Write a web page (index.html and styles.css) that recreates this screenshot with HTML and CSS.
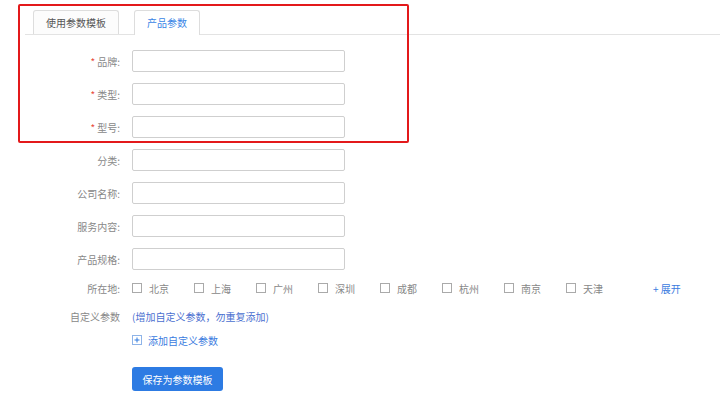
FILE: index.html
```html
<!DOCTYPE html>
<html lang="zh-CN">
<head>
    <meta charset="UTF-8">
    <meta name="viewport" content="width=device-width, initial-scale=1.0">
    <title>产品参数</title>
    <link rel="stylesheet" href="styles.css">
</head>
<body>
    <div class="page">
        <div class="tabs">
            <div class="tab">使用参数模板</div>
            <div class="tab active">产品参数</div>
        </div>

        <div class="form">
            <div class="form-row">
                <label class="form-label"><span class="req">*</span>品牌:</label>
                <input type="text" class="form-input">
            </div>
            <div class="form-row">
                <label class="form-label"><span class="req">*</span>类型:</label>
                <input type="text" class="form-input">
            </div>
            <div class="form-row">
                <label class="form-label"><span class="req">*</span>型号:</label>
                <input type="text" class="form-input">
            </div>
            <div class="form-row">
                <label class="form-label">分类:</label>
                <input type="text" class="form-input">
            </div>
            <div class="form-row">
                <label class="form-label">公司名称:</label>
                <input type="text" class="form-input">
            </div>
            <div class="form-row">
                <label class="form-label">服务内容:</label>
                <input type="text" class="form-input">
            </div>
            <div class="form-row">
                <label class="form-label">产品规格:</label>
                <input type="text" class="form-input">
            </div>

            <div class="form-row city-row">
                <label class="form-label">所在地:</label>
                <div class="cities">
                    <span class="city"><i class="box"></i>北京</span>
                    <span class="city"><i class="box"></i>上海</span>
                    <span class="city"><i class="box"></i>广州</span>
                    <span class="city"><i class="box"></i>深圳</span>
                    <span class="city"><i class="box"></i>成都</span>
                    <span class="city"><i class="box"></i>杭州</span>
                    <span class="city"><i class="box"></i>南京</span>
                    <span class="city"><i class="box"></i>天津</span>
                    <a class="expand">+ 展开</a>
                </div>
            </div>

            <div class="form-row text-row">
                <label class="form-label">自定义参数</label>
                <span class="hint">(增加自定义参数，勿重复添加)</span>
            </div>

            <div class="form-row add-row">
                <span class="form-label"></span>
                <a class="add-link">
                    <svg class="add-icon" width="10" height="10" viewBox="0 0 10 10">
                        <rect x="0.5" y="0.5" width="9" height="9" fill="#fff" stroke="#8fb4e8"/>
                        <path d="M5 2.5v5M2.5 5h5" stroke="#2f7be0" stroke-width="1"/>
                    </svg>
                    添加自定义参数
                </a>
            </div>

            <div class="form-row btn-row">
                <span class="form-label"></span>
                <button class="save-btn">保存为参数模板</button>
            </div>
        </div>

        <div class="mark"></div>
    </div>
</body>
</html>
```

FILE: styles.css
```css
body {
    margin: 0;
    background-color: #fff;
    font-family: "Noto Sans CJK SC", "Noto Sans", sans-serif;
    font-size: 10px;
    color: #777;
}
.page {
    position: relative;
    padding-top: 10px;
}
.tabs {
    display: flex;
    gap: 15px;
    margin-left: 25px;
    padding-left: 8px;
    border-bottom: 1px solid #e3e3e3;
}
.tab {
    height: 23px;
    line-height: 23px;
    padding: 0 12px;
    border: 1px solid #ddd;
    border-bottom: none;
    border-radius: 3px 3px 0 0;
    background-color: #fcfcfc;
    color: #555;
}
.tab.active {
    background-color: #fff;
    color: #3a86e6;
    margin-bottom: -1px;
    height: 24px;
}
.form {
    display: flex;
    flex-direction: column;
    gap: 11px;
    margin-top: 15px;
}
.form-row {
    display: flex;
    align-items: center;
}
.form-label {
    width: 120px;
    padding-right: 12px;
    text-align: right;
    color: #888;
    flex-shrink: 0;
}
.req {
    color: #e84a3a;
    margin-right: 2px;
}
.form-input {
    width: 213px;
    height: 22px;
    box-sizing: border-box;
    border: 1px solid #cfcfcf;
    border-radius: 2px;
    margin: 0;
    padding: 0 6px;
}
.city-row {
    height: 14px;
}
.cities {
    display: flex;
    align-items: center;
}
.city {
    display: flex;
    align-items: center;
    width: 62px;
    color: #888;
}
.box {
    width: 8px;
    height: 8px;
    border: 1px solid #aaa;
    margin-right: 7px;
}
.expand {
    margin-left: 25px;
    color: #3a7be0;
}
.text-row {
    height: 14px;
    margin-top: 3px;
}
.hint {
    color: #4a6fd0;
}
.add-row {
    height: 14px;
    margin-top: -1px;
}
.add-link {
    display: flex;
    align-items: center;
    gap: 6px;
    color: #3a7be0;
}
.btn-row {
    margin-top: 9px;
}
.save-btn {
    height: 24px;
    width: 91px;
    border: none;
    border-radius: 3px;
    background-color: #2d7be3;
    color: #fff;
    font-family: inherit;
    font-size: 10px;
    padding: 0;
}
.mark {
    position: absolute;
    left: 18px;
    top: 4px;
    width: 387px;
    height: 135px;
    border: 2px solid #e3191b;
    border-radius: 2px;
}
```
